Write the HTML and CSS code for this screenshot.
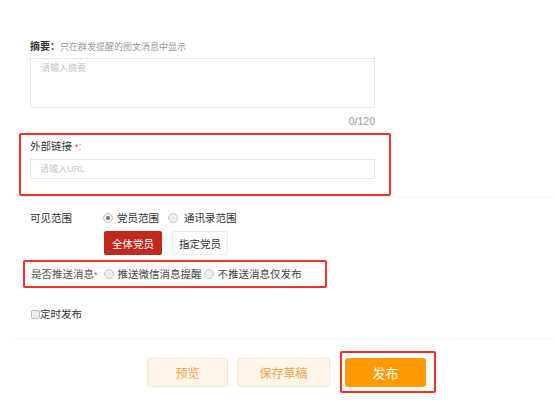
FILE: index.html
```html
<!DOCTYPE html>
<html>
<head>
    <title>发布</title>
    <meta charset="utf-8">
    <link rel="stylesheet" href="styles.css">
</head>
<body>
    <div class="page">
        <div class="field summary">
            <div class="label"><b>摘要：</b><span class="hint">只在群发提醒的图文消息中显示</span></div>
            <div class="textarea">请输入摘要</div>
            <div class="count">0/120</div>
        </div>

        <div class="mark mark-link">
            <div class="label">外部链接 <span class="req">*</span><span class="colon">:</span></div>
            <div class="input">请输入URL</div>
        </div>

        <div class="divider"></div>

        <div class="field row">
            <span class="row-label">可见范围</span>
            <span class="radio checked"></span><span class="opt">党员范围</span>
            <span class="radio second"></span><span class="opt">通讯录范围</span>
        </div>

        <div class="field scope-btns">
            <span class="btn-red">全体党员</span>
            <span class="btn-white">指定党员</span>
        </div>

        <div class="mark mark-push">
            <span class="push-label">是否推送消息<span class="req">*</span></span>
            <span class="radio"></span><span class="opt">推送微信消息提醒</span>
            <span class="radio tight"></span><span class="opt">不推送消息仅发布</span>
        </div>

        <div class="field timer">
            <span class="checkbox"></span><span>定时发布</span>
        </div>

        <div class="divider bottom"></div>

        <div class="actions">
            <span class="btn-light preview">预览</span>
            <span class="btn-light draft">保存草稿</span>
            <div class="mark mark-publish">
                <span class="btn-orange">发布</span>
            </div>
        </div>
    </div>
</body>
</html>
```

FILE: styles.css
```css
body {
    margin: 0;
    padding: 0;
    background-color: #fff;
    font-family: "Liberation Sans", "Noto Sans CJK SC", sans-serif;
    color: #333;
    font-size: 10.5px;
}

.page {
    padding-top: 39px;
}

.field {
    margin-left: 30px;
}

.label {
    line-height: 14px;
    height: 14px;
    white-space: nowrap;
}

.label b {
    font-size: 10px;
    color: #333;
}

.hint {
    font-size: 9px;
    color: #999;
}

.textarea {
    margin-top: 5px;
    width: 345px;
    height: 50px;
    box-sizing: border-box;
    border: 1px solid #e6e6e6;
    padding: 3px 10px;
    line-height: 12px;
    font-size: 9px;
    color: #c4c4c4;
}

.count {
    width: 345px;
    margin-top: 6px;
    text-align: right;
    line-height: 14px;
    font-size: 10.5px;
    color: #999;
}

/* red annotation boxes */
.mark {
    border: 2px solid #f23030;
    border-radius: 2px;
    box-sizing: border-box;
}

.mark-link {
    margin: 5px 0 0 19px;
    width: 372px;
    height: 63px;
    padding: 4px 0 0 9px;
}

.req {
    color: #f04040;
    font-size: 9px;
}

.colon {
    color: #999;
}

.input {
    margin-top: 6px;
    width: 345px;
    height: 20px;
    box-sizing: border-box;
    border: 1px solid #e6e6e6;
    padding-left: 9px;
    line-height: 18px;
    font-size: 9px;
    color: #c4c4c4;
}

.divider {
    height: 1px;
    margin-left: 15px;
    background-color: #f0f0f0;
}

.row {
    display: flex;
    align-items: center;
    margin-top: 14px;
    line-height: 14px;
}

.row-label {
    width: 73px;
}

.radio {
    display: inline-block;
    width: 8px;
    height: 8px;
    border: 1px solid #c8c8c8;
    border-radius: 50%;
    background-color: #eee;
    margin-right: 4px;
    position: relative;
    flex-shrink: 0;
}

.radio.checked::after {
    content: "";
    position: absolute;
    left: 2px;
    top: 2px;
    width: 4px;
    height: 4px;
    border-radius: 50%;
    background-color: #777;
}

.radio.second {
    margin-left: 9px;
    margin-right: 6px;
}

.opt {
    white-space: nowrap;
}

.scope-btns {
    display: flex;
    gap: 10px;
    margin-top: 6px;
    margin-left: 104px;
}

.btn-red, .btn-white {
    display: flex;
    align-items: center;
    justify-content: center;
    height: 24px;
    box-sizing: border-box;
    border-radius: 2px;
}

.btn-red {
    width: 58px;
    background-color: #c1291e;
    color: #fff;
}

.btn-white {
    width: 56px;
    border: 1px solid #ececec;
    color: #333;
}

.mark-push {
    display: flex;
    align-items: center;
    margin: 5px 0 0 23px;
    width: 304px;
    height: 28px;
    padding: 0 0 0 6px;
    line-height: 14px;
}

.push-label {
    color: #555;
    margin-right: 6px;
    white-space: nowrap;
}

.mark-push .opt {
    color: #444;
    margin-right: 2px;
}

.radio.tight {
    margin-left: 0;
}

.timer {
    display: flex;
    align-items: center;
    margin-top: 19px;
    line-height: 14px;
    margin-left: 31px;
}

.checkbox {
    display: inline-block;
    width: 9px;
    height: 9px;
    box-sizing: border-box;
    border: 1px solid #bbb;
    border-radius: 2px;
    background-color: #eee;
}

.divider.bottom {
    margin-top: 18px;
}

.actions {
    display: flex;
    align-items: center;
    padding-left: 147px;
    margin-top: 11px;
}

.btn-light, .btn-orange {
    display: flex;
    align-items: center;
    justify-content: center;
    height: 29px;
    box-sizing: border-box;
    border-radius: 3px;
    font-size: 12px;
}

.btn-light {
    background-color: #fef5e8;
    border: 1px solid #f6e6d2;
    color: #f5a44c;
}

.preview {
    width: 81px;
}

.draft {
    width: 93px;
    margin-left: 9px;
}

.mark-publish {
    margin-left: 10px;
    width: 96px;
    height: 42px;
    padding: 5px 8px 4px 3px;
    display: flex;
    align-items: center;
}

.btn-orange {
    width: 81px;
    background-color: #ff9a00;
    color: #fff;
    font-size: 13px;
}
```
